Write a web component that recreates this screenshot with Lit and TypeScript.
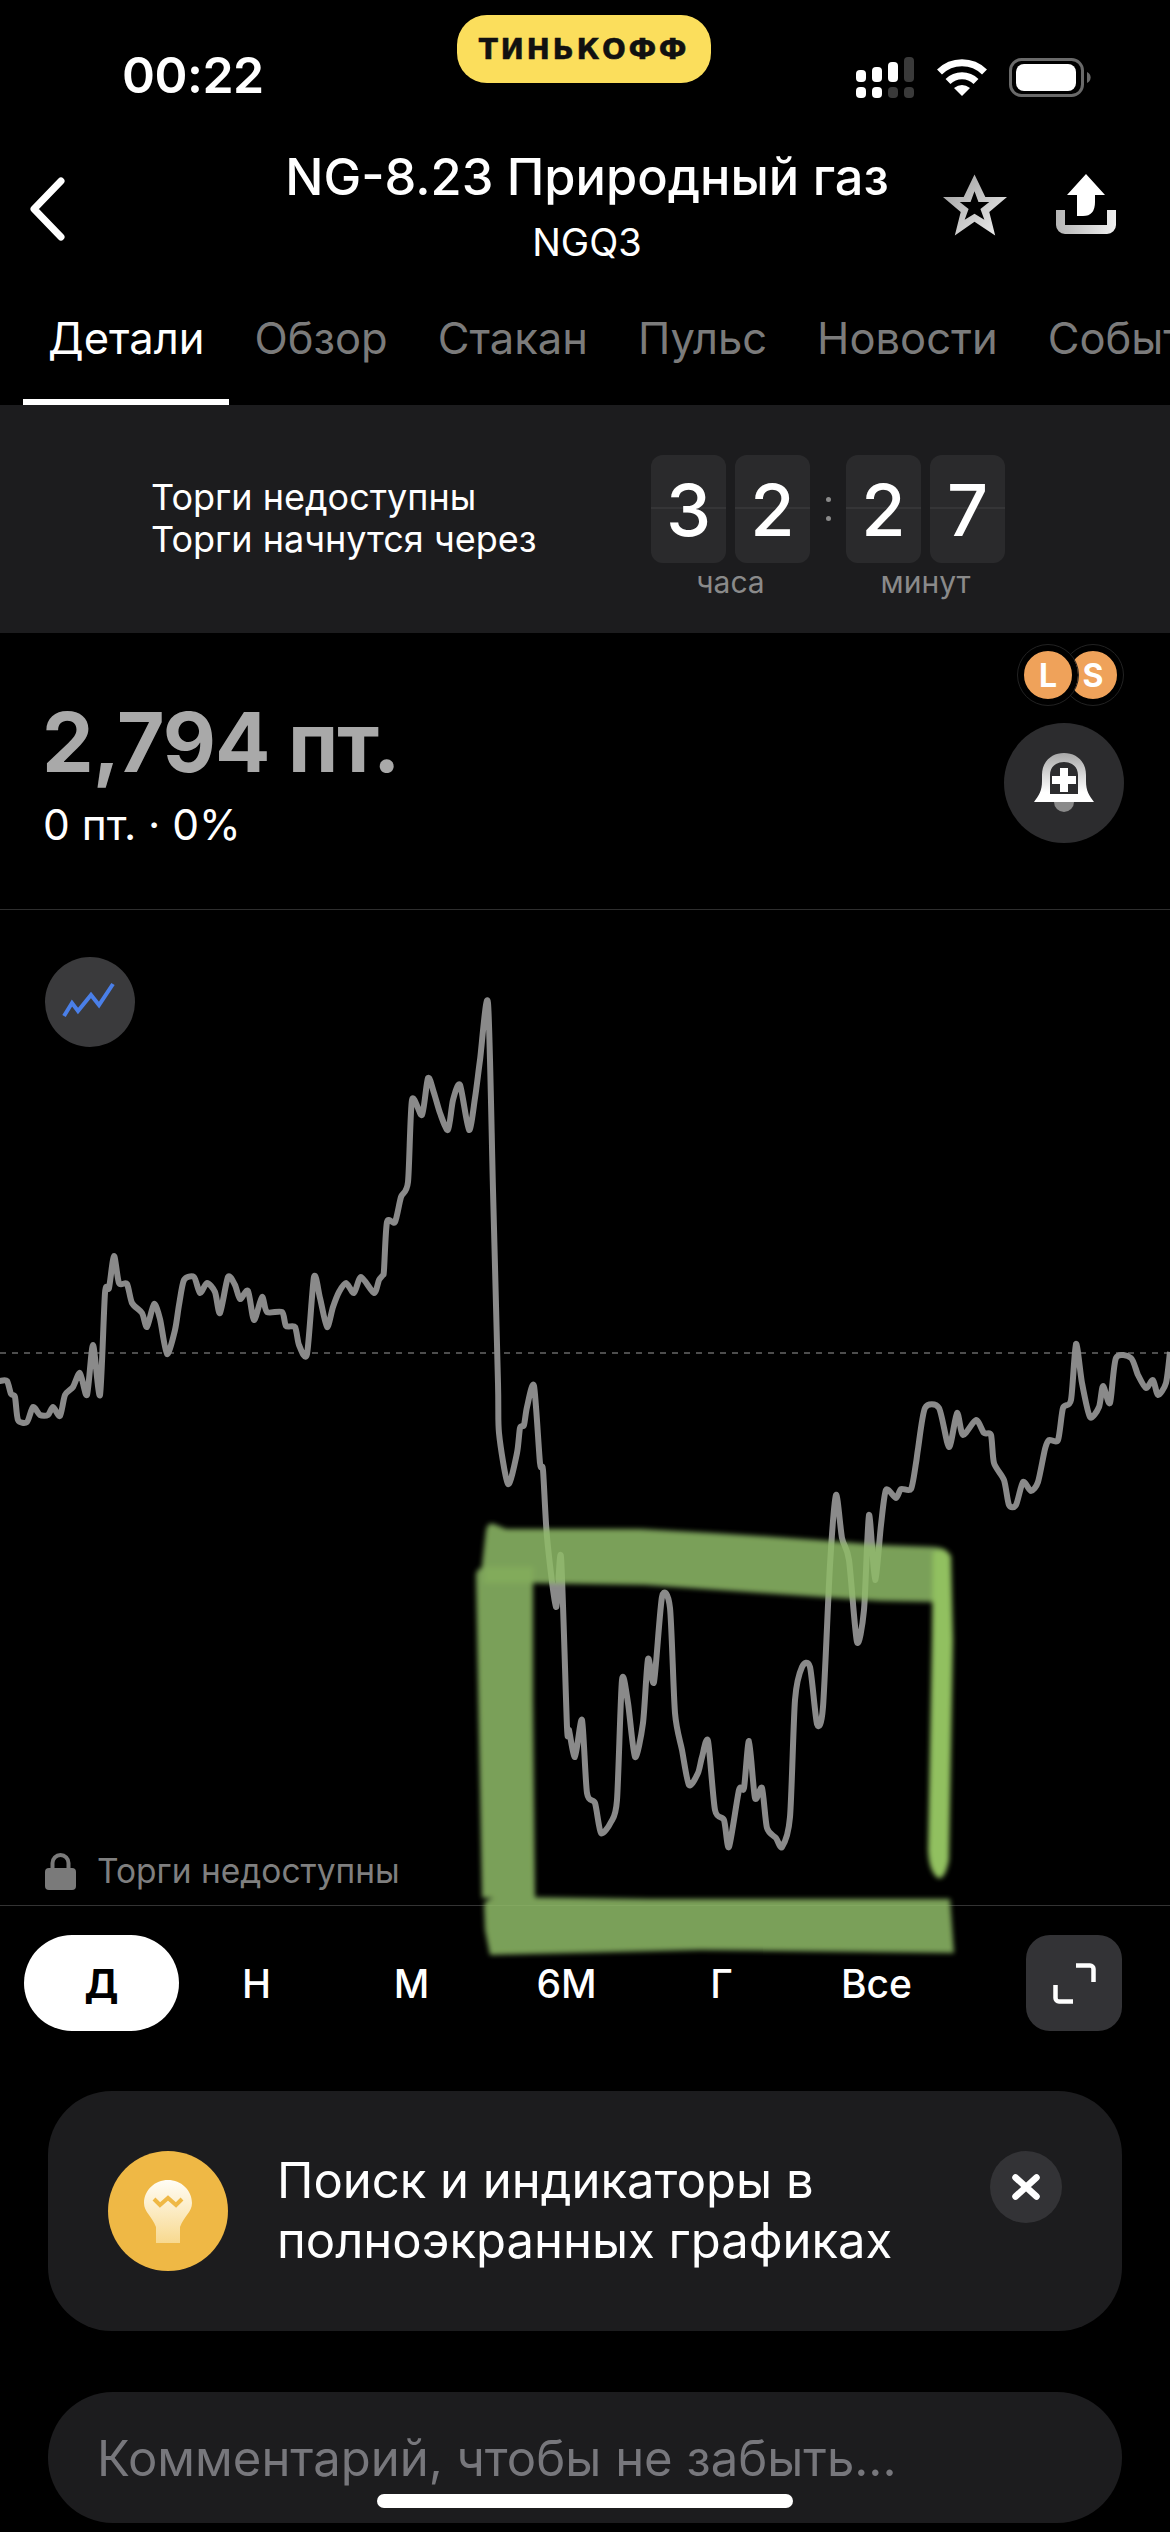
import { LitElement, html, css, svg } from 'lit';
import { customElement } from 'lit/decorators.js';

// Traced price line, in page pixels.
const PRICE = `0,1381 7,1381 11,1394 15,1397 18,1420 27,1422 33,1407 40,1415 48,1415 53,1407 60,1416 65,1395
73,1387 80,1373 87,1395 93,1345 100,1395 105,1293 109,1288 114,1256 119,1283 127,1284 132,1303 142,1313
147,1327 154,1304 160,1319 167,1354 175,1330 179,1305 184,1280 194,1277 200,1293 207,1283 215,1292 220,1313
228,1277 235,1285 240,1299 248,1291 254,1320 262,1297 267,1312 282,1312 286,1326 295,1327 299,1345 307,1354
314,1277 320,1298 327,1327 333,1307 339,1292 346,1283 354,1293 361,1277 374,1293 379,1280 383,1275 384,1270
387,1222 395,1222 401,1197 408,1182 412,1100 422,1115 428,1078 434,1093 440,1113 448,1130 453,1100 460,1085
469,1130 475,1098 480,1060 488,1003 493,1190 498,1383 499,1433 508,1484 517,1453 520,1428 524,1425 527,1407
534,1386 540,1463 543,1470 547,1537 556,1607 561,1557 567,1727 569,1730 575,1757 582,1720 587,1793 595,1803
601,1833 611,1822 617,1800 622,1680 628,1703 635,1757 643,1723 648,1659 654,1682 662,1597 670,1608 675,1713
682,1750 689,1785 698,1773 702,1757 708,1741 715,1810 724,1820 729,1847 739,1790 744,1788 749,1741 755,1798
762,1788 767,1828 776,1838 782,1847 790,1817 795,1700 802,1667 810,1667 817,1724 823,1707 830,1565 836,1495
842,1538 849,1560 857,1642 864,1610 869,1515 875,1580 881,1525 886,1490 896,1498 901,1489 911,1489 916,1463
918,1449 925,1408 939,1408 949,1447 957,1413 963,1435 976,1420 984,1433 991,1435 994,1463 1004,1480 1009,1505
1016,1505 1023,1482 1031,1491 1038,1482 1045,1449 1049,1440 1058,1440 1063,1408 1071,1400 1076,1344 1082,1383
1090,1417 1099,1407 1103,1386 1110,1403 1116,1358 1131,1358 1138,1375 1146,1388 1153,1380 1158,1395 1166,1383
1170,1352`;

const RANGES = ['Д', 'Н', 'М', '6М', 'Г', 'Все'];
const TABS = ['Детали', 'Обзор', 'Стакан', 'Пульс', 'Новости', 'События'];

// Rounds the traced points off so the peaks aren't knife sharp.
function smoothPath(raw: string) {
  const p = raw.trim().split(/\s+/).map((s) => s.split(',').map(Number));
  let d = `M${p[0][0]} ${p[0][1]}`;
  for (let i = 0; i < p.length - 1; i++) {
    const a = p[Math.max(i - 1, 0)];
    const b = p[i];
    const c = p[i + 1];
    const e = p[Math.min(i + 2, p.length - 1)];
    const k = 1 / 8;
    d += `C${b[0] + (c[0] - a[0]) * k} ${b[1] + (c[1] - a[1]) * k} ${c[0] - (e[0] - b[0]) * k} ${c[1] - (e[1] - b[1]) * k} ${c[0]} ${c[1]}`;
  }
  return d;
}

@customElement('app-root')
export class AppRoot extends LitElement {
  static styles = css`
    :host {
      display: block;
      position: relative;
      width: 1170px;
      height: 2532px;
      overflow: hidden;
      background: #000;
      color: #fff;
      font-family: Inter, 'Noto Sans', sans-serif;
    }

    /* ---- status bar ---- */
    .status {
      height: 120px;
      display: grid;
      grid-template-columns: 122px 138px 1fr;
      align-items: start;
    }
    .time {
      grid-column: 2;
      margin-top: 47px;
      font-size: 50px;
      line-height: 56px;
      font-weight: 600;
      letter-spacing: -0.5px;
      white-space: nowrap;
    }
    .status-icons {
      grid-column: 3;
      margin-top: 57px;
      margin-left: 596px;
      display: flex;
      align-items: flex-start;
      gap: 23px;
    }
    .island {
      position: absolute;
      left: 457px;
      top: 15px;
      width: 254px;
      height: 68px;
      border-radius: 30px;
      background: #fbde5c;
      color: #111;
      display: flex;
      align-items: center;
      justify-content: center;
      font-family: 'DejaVu Sans', sans-serif;
      font-size: 28px;
      font-weight: 700;
      letter-spacing: 2.600px;
      -webkit-text-stroke: 0.5px #111;
    }

    /* ---- nav ---- */
    .nav {
      height: 180px;
      display: grid;
      grid-template-columns: 287px minmax(0, 1fr) 283px;
    }
    .back { margin: 57px 0 0 28px; }
    .heading { display: flex; flex-direction: column; align-items: center; padding-top: 27px; }
    .title { font-size: 50.500px; line-height: 60px; font-weight: 500; white-space: nowrap; }
    .ticker { margin-top: 12px; font-size: 38px; line-height: 46px; }
    .actions { display: flex; align-items: flex-start; gap: 49px; padding: 54px 0 0 56px; }

    /* ---- tabs ---- */
    .tabs {
      height: 105px;
      display: flex;
      overflow: hidden;
      white-space: nowrap;
      padding-left: 23px;
    }
    .tab {
      flex: none;
      box-sizing: border-box;
      height: 105px;
      padding: 12px 25px 0;
      font-size: 43.500px;
      line-height: 52px;
      color: #7b7b7b;
    }
    .tab.active { color: #fff; border-bottom: 6px solid #fff; }

    /* ---- countdown banner ---- */
    .banner {
      box-sizing: border-box;
      height: 228px;
      background: #1c1c1e;
      display: flex;
      padding: 50px 0 0 151px;
    }
    .banner-text { width: 500px; padding-top: 21px; font-size: 36px; line-height: 42px; }
    .clock { display: grid; grid-template-columns: 75px 75px 18px 75px 75px; column-gap: 9px; grid-template-rows: 108px auto; }
    .clock-sep { display: flex; flex-direction: column; justify-content: center; align-items: center; gap: 14px; }
    .clock-sep i { width: 5px; height: 5px; border-radius: 50%; background: #8a8a8a; }
    .digit {
      border-radius: 12px;
      background: linear-gradient(#2a2a2c 52px, #353537 52px, #353537 54px, #2a2a2c 54px);
      display: flex;
      align-items: center;
      justify-content: center;
      font-size: 72px;
      font-weight: 500;
    }
    .unit { margin-top: 2px; font-size: 30px; line-height: 34px; color: #8a8a8a; text-align: center; }
    .unit.hours { grid-column: 1 / 3; }
    .unit.minutes { grid-column: 4 / 6; }

    /* ---- price ---- */
    .quote {
      box-sizing: content-box;
      height: 276px;
      border-bottom: 1px solid #2e2e2e;
      display: flex;
      justify-content: space-between;
      padding: 0 47px 0 42px;
    }
    .price { margin-top: 60px; font-size: 82px; line-height: 100px; font-weight: 700; color: #a9a9a9; white-space: nowrap; letter-spacing: -1px; }
    .change { margin: 8px 0 0 1px; font-size: 42.500px; line-height: 48px; }
    .alerts { display: flex; flex-direction: column; align-items: flex-end; padding-top: 12px; }
    .badges { display: flex; }
    .badge {
      width: 48px;
      height: 48px;
      box-sizing: content-box;
      border: 6px solid #000;
      border-radius: 50%;
      background: #efa25a;
      display: flex;
      align-items: center;
      justify-content: center;
      font-size: 32px;
      font-weight: 700;
      outline: 1px solid #222;
    }
    .badge.long { position: relative; z-index: 1; margin-right: -15px; }
    .bell {
      margin: 18px -1px 0 0;
      width: 120px;
      height: 120px;
      border-radius: 50%;
      background: #2c2c2e;
      display: flex;
      align-items: center;
      justify-content: center;
    }

    /* ---- chart ---- */
    .chart { position: relative; height: 995px; border-bottom: 1px solid #333; }
    .chart-canvas { position: absolute; left: 0; top: 0; }
    .chart-mode {
      position: absolute;
      left: 45px;
      top: 47px;
      width: 90px;
      height: 90px;
      border-radius: 50%;
      background: #3a3a3c;
    }
    .lock {
      position: absolute;
      left: 45px;
      top: 942px;
      display: flex;
      align-items: center;
      gap: 21px;
      font-size: 33.500px;
      line-height: 38px;
      color: #7f7f7f;
    }

    /* ---- range picker ---- */
    .range { display: flex; align-items: center; height: 96px; margin-top: 29px; padding: 0 48px 0 24px; }
    .range-item {
      width: 155px;
      height: 96px;
      border-radius: 48px;
      display: flex;
      align-items: center;
      justify-content: center;
      font-size: 39px;
      font-weight: 500;
    }
    .range-item.active { background: #fff; color: #000; font-weight: 700; }
    .expand {
      margin-left: auto;
      width: 96px;
      height: 96px;
      border-radius: 24px;
      background: #333336;
      display: flex;
      align-items: center;
      justify-content: center;
    }

    /* ---- tip + comment ---- */
    .tip {
      margin: 60px 48px 0;
      height: 240px;
      border-radius: 64px;
      background: #1c1c1e;
      display: flex;
      align-items: flex-start;
      padding: 60px 60px 0;
      box-sizing: border-box;
    }
    .tip-icon {
      flex: none;
      width: 120px;
      height: 120px;
      border-radius: 50%;
      background: #efb845;
      display: flex;
      align-items: center;
      justify-content: center;
    }
    .tip-text { flex: 1; margin: 0 0 0 49px; font-size: 49px; line-height: 60px; }
    .tip-close {
      flex: none;
      width: 72px;
      height: 72px;
      border-radius: 50%;
      background: #333336;
      display: flex;
      align-items: center;
      justify-content: center;
    }
    .comment {
      margin: 61px 48px 0;
      height: 131px;
      border-radius: 65px;
      background: #1c1c1e;
      box-sizing: border-box;
      padding: 37px 0 0 49px;
      font-size: 49px;
      line-height: 60px;
      color: #77777c;
    }
    .home {
      position: absolute;
      left: 377px;
      top: 2494px;
      width: 416px;
      height: 14px;
      border-radius: 7px;
      background: #fff;
    }

    /* marker scribble drawn on top of the screenshot */
    .scribble { position: absolute; left: 0; top: 0; pointer-events: none; }
  `;

  private statusIcons() {
    return html`
      <svg width="58" height="41" viewBox="0 0 58 41">
        <g fill="#fff">
          <rect x="0" y="13" width="10" height="12" rx="4"/>
          <rect x="16" y="10" width="10" height="15" rx="4"/>
          <rect x="32" y="5" width="10" height="20" rx="4"/>
          <rect x="0" y="30" width="10" height="11" rx="4"/>
          <rect x="16" y="30" width="10" height="11" rx="4"/>
        </g>
        <g fill="#3a3a3a">
          <rect x="48" y="0" width="10" height="25" rx="4"/>
          <rect x="32" y="30" width="10" height="11" rx="4"/>
          <rect x="48" y="30" width="10" height="11" rx="4"/>
        </g>
      </svg>
      <svg width="50" height="38" viewBox="0 0 50 38" style="margin-top:2px">
        <path d="M2.5 13A32 32 0 0 1 47.500 13" fill="none" stroke="#fff" stroke-width="7"/>
        <path d="M11 22.500A20 20 0 0 1 39 22.500" fill="none" stroke="#fff" stroke-width="7"/>
        <path d="M25 37L17 29Q25 23 33 29Z" fill="#fff"/>
      </svg>
      <svg width="83" height="40" viewBox="0 0 83 40" style="margin-left:-1px;margin-top:1px">
        <rect x="1.500" y="1.500" width="72" height="36" rx="11" fill="none" stroke="#6a6a6a" stroke-width="3"/>
        <rect x="7" y="6" width="60" height="27" rx="8" fill="#fff"/>
        <path d="M78 14a6 6 0 0 1 0 11Z" fill="#6a6a6a"/>
      </svg>
    `;
  }

  private actionIcons() {
    return html`
      <svg width="64" height="62" viewBox="0 0 65 62">
        <defs>
          <linearGradient id="silver" x1="0" y1="0" x2="1" y2="1">
            <stop offset="0" stop-color="#9a9a9a"/>
            <stop offset="1" stop-color="#f2f2f2"/>
          </linearGradient>
        </defs>
        <path fill="url(#silver)" fill-rule="evenodd"
          d="M32 0L43 23H65L47 38L53 62L32 48L12 62L18 38L0 23H21ZM32 17L28 28H17L26 35L22 46L32 40L42 46L38 35L47 28H36Z"/>
      </svg>
      <svg width="60" height="60" viewBox="0 0 60 60">
        <defs>
          <linearGradient id="tray" gradientUnits="userSpaceOnUse" x1="0" y1="0" x2="60" y2="0">
            <stop offset="0" stop-color="#b5b5b5"/>
            <stop offset="1" stop-color="#f0f0f0"/>
          </linearGradient>
        </defs>
        <path d="M30 0L49 21H39V28Q39 42 27 42H21V21H11Z" fill="#fff"/>
        <path d="M4.500 36V51a4.500 4.500 0 0 0 4.500 4.500H51a4.500 4.500 0 0 0 4.500-4.500V36" fill="none" stroke="url(#tray)" stroke-width="9"/>
      </svg>
    `;
  }

  private scribble() {
    return svg`
      <defs><filter id="soft"><feGaussianBlur stdDeviation="2.500"/></filter></defs>
      <g filter="url(#soft)" opacity="0.86">
        <path fill="#8fbb68" d="M486 1530Q488 1522 494 1524L506 1529L640 1529Q760 1535 880 1545L935 1547Q948 1548 950 1556L950 1602L935 1602L880 1601Q760 1593 645 1585L530 1583L480 1583Z"/>
        <path fill="#8fbb68" d="M476 1575Q477 1567 486 1567L533 1567L533 1700L535 1898L482 1898L479 1740Z"/>
        <path fill="#98c76b" d="M484 1567H533V1583H484Z"/>
        <path fill="#a9e070" d="M933 1552Q944 1546 951 1556L953 1640L949 1860Q945 1880 938 1878Q929 1872 928 1850L932 1640Z"/>
        <path fill="#8fbb68" d="M484 1904Q488 1896 510 1897L650 1899L950 1899L954 1953L700 1950L490 1955L485 1930Z"/>
      </g>
    `;
  }

  render() {
    return html`
      <div class="status">
        <span class="time">00:22</span>
        <div class="status-icons">${this.statusIcons()}</div>
      </div>
      <div class="island">ТИНЬКОФФ</div>

      <div class="nav">
        <svg class="back" width="40" height="64" viewBox="0 0 40 64">
          <path d="M33 4L6 32L33 60" fill="none" stroke="#fff" stroke-width="7" stroke-linecap="round" stroke-linejoin="round"/>
        </svg>
        <div class="heading">
          <div class="title">NG-8.23 Природный газ</div>
          <div class="ticker">NGQ3</div>
        </div>
        <div class="actions">${this.actionIcons()}</div>
      </div>

      <div class="tabs">
        ${TABS.map((t, i) => html`<div class="tab ${i === 0 ? 'active' : ''}">${t}</div>`)}
      </div>

      <div class="banner">
        <div class="banner-text">Торги недоступны<br>Торги начнутся через</div>
        <div class="clock">
          <div class="digit">3</div>
          <div class="digit">2</div>
          <div class="clock-sep"><i></i><i></i></div>
          <div class="digit">2</div>
          <div class="digit">7</div>
          <div class="unit hours">часа</div>
          <div class="unit minutes">минут</div>
        </div>
      </div>

      <div class="quote">
        <div>
          <div class="price">2,794 пт.</div>
          <div class="change">0 пт. · 0%</div>
        </div>
        <div class="alerts">
          <div class="badges">
            <div class="badge long">L</div>
            <div class="badge">S</div>
          </div>
          <div class="bell">
            <svg width="60" height="60" viewBox="0 0 60 60">
              <defs>
                <linearGradient id="bell" x1="0" y1="0" x2="0" y2="1">
                  <stop offset="0" stop-color="#a8a8a8"/>
                  <stop offset="0.8" stop-color="#fff"/>
                </linearGradient>
              </defs>
              <path d="M20 49H40A10 10 0 0 1 20 49Z" fill="#8a8a8a"/>
              <path fill="url(#bell)" fill-rule="evenodd"
                d="M0 49C5 42 8 38 8 28V22C8 8 18 0 30 0C42 0 52 8 52 22V28C52 38 55 42 60 49ZM30 9C22 9 16 14 16 22V41H44V22C44 14 38 9 30 9Z"/>
              <path d="M26 15H34V23H42V31H34V39H26V31H18V23H26Z" fill="#fff"/>
            </svg>
          </div>
        </div>
      </div>

      <div class="chart">
        <svg class="chart-canvas" width="1170" height="995" viewBox="0 910 1170 995">
          <line x1="0" y1="1353" x2="1170" y2="1353" stroke="#4d4d4d" stroke-width="2" stroke-dasharray="6 6"/>
          <path d=${smoothPath(PRICE)} fill="none" stroke="#8a8a8a" stroke-width="6" stroke-linejoin="round"/>
        </svg>
        <div class="chart-mode">
          <svg width="90" height="90" viewBox="45 957 90 90">
            <polyline points="64,1016 72,1003 78,1011 91,995 99,1005 113,984" fill="none" stroke="#4a7fe8" stroke-width="4"/>
          </svg>
        </div>
        <div class="lock">
          <svg width="31" height="38" viewBox="0 0 31 38">
            <path d="M7.500 17V11a8 8 0 0 1 16 0V17" fill="none" stroke="#7a7a7a" stroke-width="4"/>
            <rect x="0" y="16" width="31" height="22" rx="4" fill="#7a7a7a"/>
          </svg>
          Торги недоступны
        </div>
      </div>

      <div class="range">
        ${RANGES.map((r, i) => html`<div class="range-item ${i === 0 ? 'active' : ''}">${r}</div>`)}
        <div class="expand">
          <svg width="43" height="41" viewBox="0 0 43 41" fill="none" stroke="#fff" stroke-width="4.500">
            <path d="M23 2.500H37a3.500 3.500 0 0 1 3.500 3.500V19"/>
            <path d="M2.500 22V35a3.500 3.500 0 0 0 3.500 3.500H20"/>
          </svg>
        </div>
      </div>

      <div class="tip">
        <div class="tip-icon">
          <svg width="48" height="63" viewBox="0 0 48 63">
            <defs>
              <linearGradient id="bulb" x1="0" y1="0" x2="0" y2="1">
                <stop offset="0" stop-color="#fffdf6"/>
                <stop offset="1" stop-color="#f8d98f"/>
              </linearGradient>
            </defs>
            <path d="M24 0C37 0 48 10 48 23C48 32 40 36 36 47V63H12V47C8 36 0 32 0 23C0 10 11 0 24 0Z" fill="url(#bulb)"/>
            <polyline points="10,19 16,25 24,18 32,25 38,19" fill="none" stroke="#efb845" stroke-width="4"/>
          </svg>
        </div>
        <div class="tip-text">Поиск и индикаторы в<br>полноэкранных графиках</div>
        <div class="tip-close">
          <svg width="30" height="28" viewBox="0 0 30 28">
            <path d="M4.500 4.500L25.500 23.500M25.500 4.500L4.500 23.500" stroke="#fff" stroke-width="6.500" stroke-linecap="round"/>
          </svg>
        </div>
      </div>

      <div class="comment">Комментарий, чтобы не забыть...</div>
      <div class="home"></div>

      <svg class="scribble" width="1170" height="2532" viewBox="0 0 1170 2532">${this.scribble()}</svg>
    `;
  }
}
